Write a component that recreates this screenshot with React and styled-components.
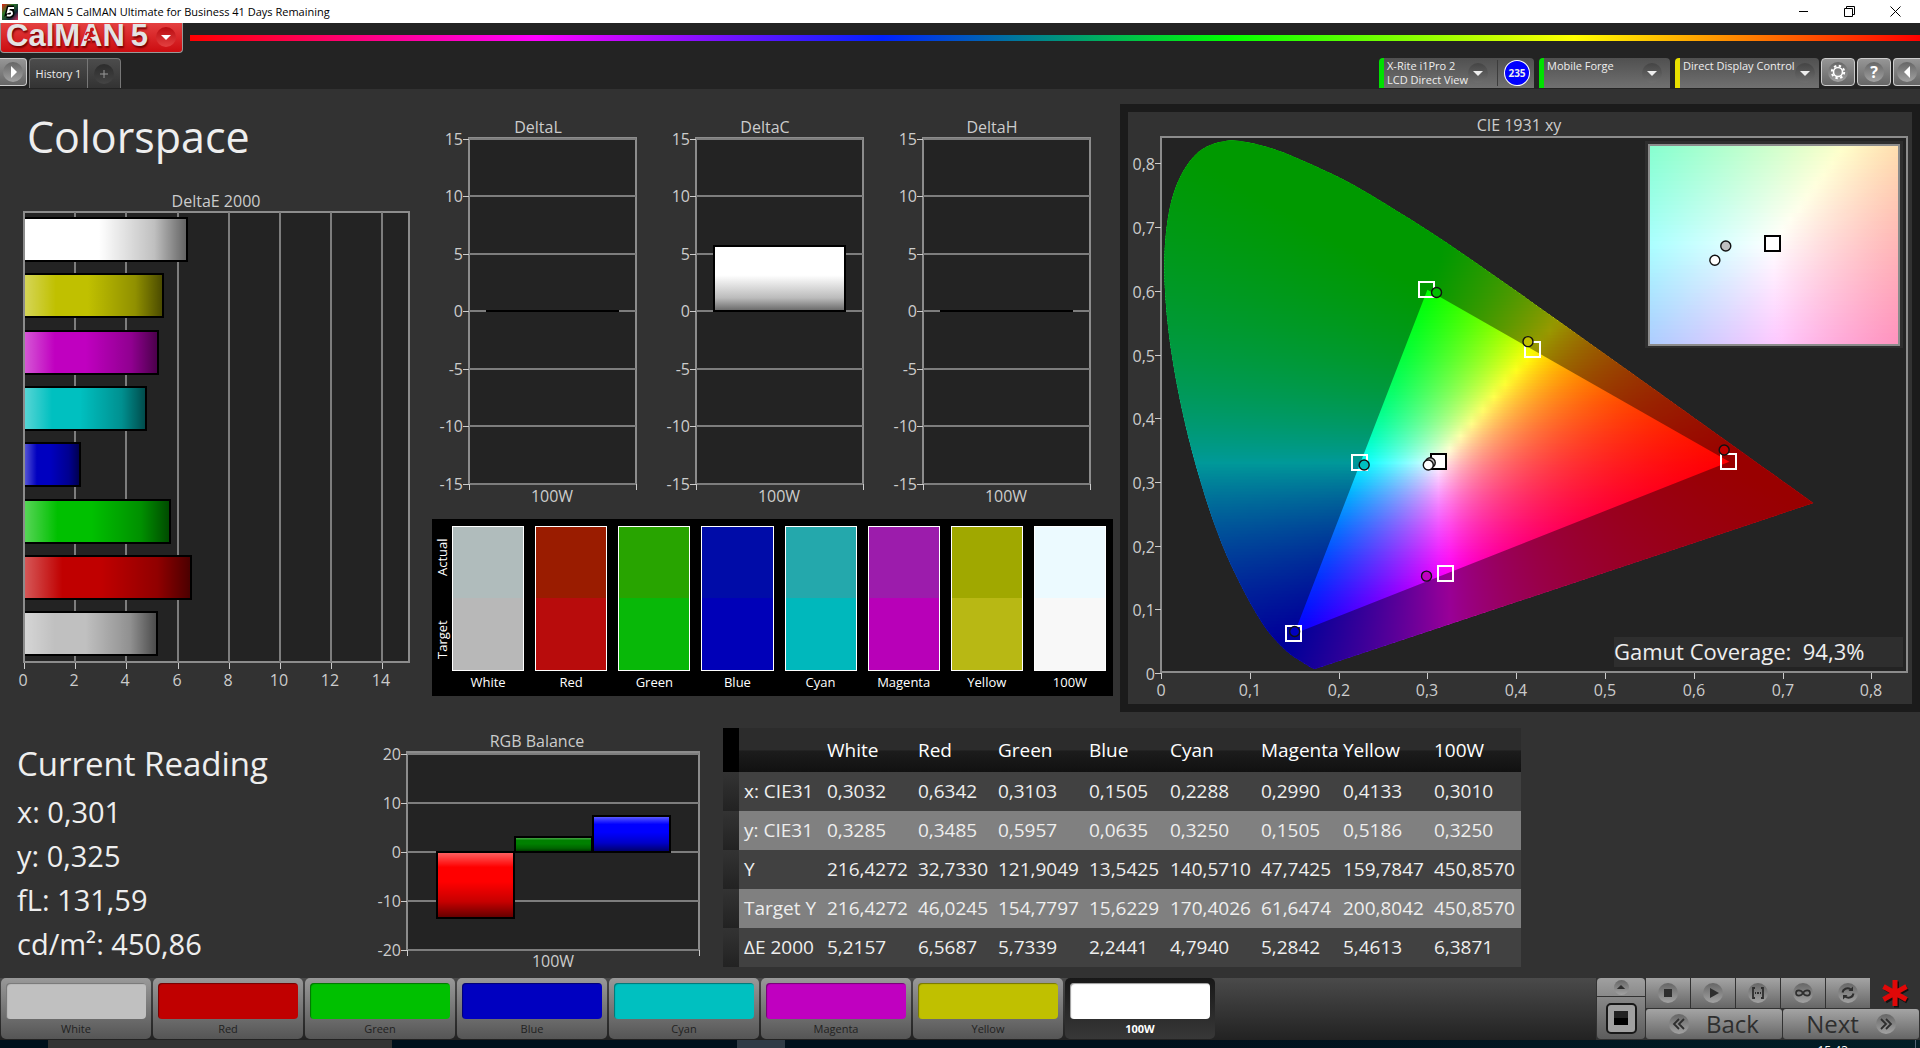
import React from "react";
import styled, { createGlobalStyle, css } from "styled-components";

const COLORS = {
  page: "#323232",
  chrome: "#232323",
  plot: "#232323",
  axis: "#8c8c8c",
  grid: "#7d7d7d",
  label: "#cccccc",
  text: "#eeeeee",
};

const FONT = '"Open Sans", "Noto Sans", sans-serif';

const PATCHES = [
  { name: "White", color: "#c0c0c0", actual: "#b0bcbc", target: "#b8b8b8", deltaE: 5.2157 },
  { name: "Red", color: "#c00000", actual: "#9a1c00", target: "#b80c0c", deltaE: 6.5687 },
  { name: "Green", color: "#00c000", actual: "#28a400", target: "#08b808", deltaE: 5.7339 },
  { name: "Blue", color: "#0000c0", actual: "#000ca8", target: "#0000b8", deltaE: 2.2441 },
  { name: "Cyan", color: "#00c0c0", actual: "#24a8ac", target: "#00b8bc", deltaE: 4.794 },
  { name: "Magenta", color: "#c000c0", actual: "#9c1cac", target: "#b800b8", deltaE: 5.2842 },
  { name: "Yellow", color: "#c0c000", actual: "#a0a800", target: "#b8b814", deltaE: 5.4613 },
  { name: "100W", color: "#ffffff", actual: "#ecfaff", target: "#f8f8f8", deltaE: 6.3871 },
];

const TABLE_ROWS = [
  ["x: CIE31", "0,3032", "0,6342", "0,3103", "0,1505", "0,2288", "0,2990", "0,4133", "0,3010"],
  ["y: CIE31", "0,3285", "0,3485", "0,5957", "0,0635", "0,3250", "0,1505", "0,5186", "0,3250"],
  ["Y", "216,4272", "32,7330", "121,9049", "13,5425", "140,5710", "47,7425", "159,7847", "450,8570"],
  ["Target Y", "216,4272", "46,0245", "154,7797", "15,6229", "170,4026", "61,6474", "200,8042", "450,8570"],
  ["ΔE 2000", "5,2157", "6,5687", "5,7339", "2,2441", "4,7940", "5,2842", "5,4613", "6,3871"],
];

// share of the table width per column, stub first
const TABLE_COLUMNS = [16, 84, 91, 80, 91, 81, 91, 82, 91, 91];

const READINGS = ["x: 0,301", "y: 0,325", "fL: 131,59", "cd/m²: 450,86"];

// CIE 1931 2° spectral locus
const LOCUS = [
  [0.1741, 0.005], [0.1726, 0.0048], [0.1689, 0.0069], [0.1644, 0.0109],
  [0.1566, 0.0177], [0.144, 0.0297], [0.1241, 0.0578], [0.1096, 0.0868],
  [0.0913, 0.1327], [0.0687, 0.2007], [0.0454, 0.295], [0.0235, 0.4127],
  [0.0082, 0.5384], [0.0039, 0.6548], [0.0139, 0.7502], [0.0389, 0.812],
  [0.0743, 0.8338], [0.1142, 0.8262], [0.1547, 0.8059], [0.1929, 0.7816],
  [0.2296, 0.7543], [0.3016, 0.6923], [0.3731, 0.6245], [0.4441, 0.5547],
  [0.5125, 0.4866], [0.5752, 0.4242], [0.627, 0.3725], [0.6915, 0.3083],
  [0.7347, 0.2653],
];

const TARGETS = [
  { x: 0.3, y: 0.6 },
  { x: 0.4193, y: 0.5053 },
  { x: 0.64, y: 0.33 },
  { x: 0.3209, y: 0.1542 },
  { x: 0.15, y: 0.06 },
  { x: 0.2246, y: 0.3287 },
  { x: 0.3127, y: 0.329, dark: true },
];

const MEASURED = [
  { x: 0.3032, y: 0.3285, fill: "#c0c0c0" },
  { x: 0.6342, y: 0.3485, fill: "#c00000" },
  { x: 0.3103, y: 0.5957, fill: "#00c000" },
  { x: 0.1505, y: 0.0635, fill: "#0000c0" },
  { x: 0.2288, y: 0.325, fill: "#00c0c0" },
  { x: 0.299, y: 0.1505, fill: "#c000c0" },
  { x: 0.4133, y: 0.5186, fill: "#c0c000" },
  { x: 0.301, y: 0.325, fill: "#ffffff" },
];

const range = (from, to, step) => {
  const out = [];
  for (let i = 0; from + i * step <= to + step / 100; i++) {
    out.push(from + i * step);
  }
  return out;
};

// xy chromaticity to the brightest displayable colour
const xyToColor = (x, y) => {
  const X = x / y;
  const Z = (1 - x - y) / y;
  const rgb = [
    3.2406 * X - 1.5372 - 0.4986 * Z,
    -0.9689 * X + 1.8758 + 0.0415 * Z,
    0.0557 * X - 0.204 + 1.057 * Z,
  ].map((v) => Math.max(v, 0));
  const top = Math.max(...rgb);
  return `rgb(${rgb.map((v) => Math.round((v / top) * 255)).join(",")})`;
};

/* ---------- charts ---------- */

const HorizontalBars = () => {
  const left = 24;
  const px = (v) => Math.round(left + v * 25.6);
  return (
    <Chart viewBox="0 0 425 510" role="img" aria-label="DeltaE 2000">
      <defs>
        <linearGradient id="shadeX">
          <stop offset="0" stopColor="#fff" stopOpacity="0.35" />
          <stop offset="0.23" stopColor="#fff" stopOpacity="0" />
          <stop offset="0.46" stopColor="#000" stopOpacity="0" />
          <stop offset="0.8" stopColor="#000" stopOpacity="0.25" />
          <stop offset="1" stopColor="#000" stopOpacity="0.62" />
        </linearGradient>
      </defs>
      <ChartText x="216" y="17" textAnchor="middle">
        DeltaE 2000
      </ChartText>
      <Plot x={left} y="22" width="385" height="450" />
      {range(0, 14, 2).map((v) => (
        <g key={v}>
          {v > 0 && <GridLine x1={px(v)} x2={px(v)} y1="22" y2="472" />}
          <Tick x1={px(v)} x2={px(v)} y1="473" y2="479" />
          <ChartText x={px(v) - 1} y="496" textAnchor="middle">
            {v}
          </ChartText>
        </g>
      ))}
      {[...PATCHES].reverse().map((p, i) => {
        const bar = {
          x: left,
          y: 28 + Math.round(i * 56.3),
          width: px(p.deltaE) - left - 1,
          height: 43,
        };
        return (
          <g key={p.name}>
            <rect {...bar} fill={p.color} />
            <rect {...bar} fill="url(#shadeX)" stroke="#000" strokeWidth="2" />
          </g>
        );
      })}
      <Axis x1={left} x2={left} y1="22" y2="472" />
    </Chart>
  );
};

const DeltaChart = ({ title, value }) => {
  const py = (v) => Math.round(199 - v * 11.5);
  return (
    <Chart viewBox="0 0 227 400" role="img" aria-label={title}>
      <defs>
        <linearGradient id="shadeDelta" x1="0" x2="0" y1="0" y2="1">
          <stop offset="0.45" stopColor="#fff" />
          <stop offset="0.8" stopColor="#bbb" />
          <stop offset="1" stopColor="#666" />
        </linearGradient>
      </defs>
      <ChartText x="113" y="21" textAnchor="middle">
        {title}
      </ChartText>
      <Plot x="44" y="26" width="167" height="346" />
      {range(-15, 15, 5).map((v) => (
        <g key={v}>
          <GridLine x1="44" x2="211" y1={py(v)} y2={py(v)} />
          <Tick x1="38" x2="44" y1={py(v)} y2={py(v)} />
          <ChartText x="38" y={py(v) + 6} textAnchor="end">
            {v}
          </ChartText>
        </g>
      ))}
      <Tick x1="44" x2="44" y1="372" y2="378" />
      <Tick x1="211" x2="211" y1="372" y2="378" />
      {value > 0 ? (
        <rect
          x="62"
          y={py(value) - 1}
          width="131"
          height={200 - py(value)}
          fill="url(#shadeDelta)"
          stroke="#000"
          strokeWidth="2"
        />
      ) : (
        <rect x="61" y="198" width="133" height="2" fill="#000" />
      )}
      <ChartText x="127" y="390" textAnchor="middle">
        100W
      </ChartText>
    </Chart>
  );
};

const BalanceChart = () => {
  const py = (v) => Math.round(120 - v * 4.9);
  const bars = [
    { x: 62, from: 0, to: -13.4, fill: "#ff0000" },
    { x: 140, from: 3, to: 0, fill: "#008000" },
    { x: 218, from: 7.3, to: 0, fill: "#0000ff" },
  ];
  return (
    <Chart viewBox="0 0 330 240" role="img" aria-label="RGB Balance">
      <defs>
        <linearGradient id="shadeY" x1="0" x2="0" y1="0" y2="1">
          <stop offset="0" stopColor="#fff" stopOpacity="0.4" />
          <stop offset="0.23" stopColor="#fff" stopOpacity="0" />
          <stop offset="0.45" stopColor="#000" stopOpacity="0" />
          <stop offset="0.75" stopColor="#000" stopOpacity="0.22" />
          <stop offset="1" stopColor="#000" stopOpacity="0.62" />
        </linearGradient>
      </defs>
      <ChartText x="162" y="15" textAnchor="middle">
        RGB Balance
      </ChartText>
      <Plot x="32" y="20" width="292" height="198" />
      {range(-20, 20, 10).map((v) => (
        <g key={v}>
          <GridLine x1="32" x2="324" y1={py(v)} y2={py(v)} />
          <Tick x1="26" x2="32" y1={py(v)} y2={py(v)} />
          <ChartText x="26" y={py(v) + 6} textAnchor="end">
            {v}
          </ChartText>
        </g>
      ))}
      <Tick x1="32" x2="32" y1="218" y2="224" />
      <Tick x1="324" x2="324" y1="218" y2="224" />
      {bars.map((b) => {
        const bar = {
          x: b.x,
          y: py(b.from),
          width: 77,
          height: py(b.to) - py(b.from),
        };
        return (
          <g key={b.fill}>
            <rect {...bar} fill={b.fill} />
            <rect {...bar} fill="url(#shadeY)" stroke="#000" strokeWidth="2" />
          </g>
        );
      })}
      <ChartText x="178" y="235" textAnchor="middle">
        100W
      </ChartText>
    </Chart>
  );
};

// Fills an xy area with thin horizontal strips, each one a sampled gradient
const Strips = ({ id, x0, x1, y0, y1, rows, cols, left, top, width, height }) => {
  const rowHeight = height / rows;
  return range(0, rows - 1, 1).map((r) => {
    const y = Math.max(y1 - ((r + 0.5) / rows) * (y1 - y0), 0.001);
    return (
      <React.Fragment key={r}>
        <linearGradient id={`${id}${r}`}>
          {range(0, cols, 1).map((c) => (
            <stop
              key={c}
              offset={c / cols}
              stopColor={xyToColor(x0 + (c / cols) * (x1 - x0), y)}
            />
          ))}
        </linearGradient>
        <rect
          x={left}
          y={top + r * rowHeight}
          width={width}
          height={Math.min(rowHeight + 1, height - r * rowHeight)}
          fill={`url(#${id}${r})`}
        />
      </React.Fragment>
    );
  });
};

const Target = ({ cx, cy, dark }) => (
  <rect
    x={Math.round(cx) - 8}
    y={Math.round(cy) - 8}
    width="15"
    height="15"
    fill={dark ? "#fff" : "none"}
    stroke={dark ? "#000" : "#fff"}
    strokeWidth="2"
  />
);

const Measured = ({ cx, cy, fill }) => (
  <circle cx={cx} cy={cy} r="5" fill={fill} stroke="#111" strokeWidth="1.4" />
);

const CieChart = () => {
  const px = (x) => 33 + x * 888;
  const py = (y) => 560 - y * 637;
  const ix = (x) => 645 + (x - 0.3127) * 4970;
  const iy = (y) => 132 - (y - 0.329) * 4050;

  const points = LOCUS.map(([x, y]) => [px(x), py(y)]);
  let locus = `M${points[0].join(" ")}`;
  for (let i = 0; i < points.length - 1; i++) {
    const a = points[Math.max(i - 1, 0)];
    const b = points[i];
    const c = points[i + 1];
    const d = points[Math.min(i + 2, points.length - 1)];
    locus += `C${b[0] + (c[0] - a[0]) / 6} ${b[1] + (c[1] - a[1]) / 6} ${
      c[0] - (d[0] - b[0]) / 6
    } ${c[1] - (d[1] - b[1]) / 6} ${c[0]} ${c[1]}`;
  }
  locus += "Z";
  const gamut = `M${px(0.64)} ${py(0.33)}L${px(0.3)} ${py(0.6)}L${px(0.15)} ${py(0.06)}Z`;

  return (
    <Chart viewBox="0 0 784 592" role="img" aria-label="CIE 1931 xy">
      <clipPath id="locus">
        <path d={locus} />
      </clipPath>
      <ChartText x="391" y="19" textAnchor="middle">
        CIE 1931 xy
      </ChartText>
      <Plot x="33" y="25" width="746" height="535" />
      {range(0, 8, 1).map((v) => (
        <g key={v}>
          <Tick x1={Math.round(px(v / 10))} x2={Math.round(px(v / 10))} y1="561" y2="567" />
          <ChartText x={Math.round(px(v / 10))} y="584" textAnchor="middle">
            {v ? `0,${v}` : "0"}
          </ChartText>
          <Tick x1="27" x2="33" y1={Math.round(py(v / 10)) + 1} y2={Math.round(py(v / 10)) + 1} />
          <ChartText x="27" y={Math.round(py(v / 10)) + 8} textAnchor="end">
            {v ? `0,${v}` : "0"}
          </ChartText>
        </g>
      ))}
      <g clipPath="url(#locus)">
        <Strips
          id="cie"
          x0={0}
          x1={0.75}
          y0={0}
          y1={0.85}
          rows={180}
          cols={60}
          left={px(0)}
          top={py(0.85)}
          width={px(0.75) - px(0)}
          height={py(0) - py(0.85)}
        />
        <path d={locus + gamut} fill="#000" fillOpacity="0.4" fillRule="evenodd" />
      </g>
      {TARGETS.map((t) => (
        <Target key={t.x} cx={px(t.x)} cy={py(t.y)} dark={t.dark} />
      ))}
      {MEASURED.map((m) => (
        <Measured key={m.x} cx={px(m.x)} cy={py(m.y)} fill={m.fill} />
      ))}

      <rect x="517" y="29" width="258" height="207" fill="#2e2e2e" />
      <Strips
        id="inset"
        x0={0.3127 - 124 / 4970}
        x1={0.3127 + 127 / 4970}
        y0={0.329 - 101 / 4050}
        y1={0.329 + 99 / 4050}
        rows={50}
        cols={30}
        left={521}
        top={33}
        width={250}
        height={200}
      />
      <rect x="521" y="33" width="250" height="200" fill="none" stroke="#8c8c8c" strokeWidth="2" />
      <Target cx={ix(0.3127)} cy={iy(0.329)} dark />
      <Measured cx={ix(0.3032)} cy={iy(0.3285)} fill="#c0c0c0" />
      <Measured cx={ix(0.301)} cy={iy(0.325)} fill="#ffffff" />

      <rect x="486" y="525" width="289" height="30" fill="#2e2e2e" />
      <GamutText x="486" y="548">
        {"Gamut Coverage:\u00a0 94,3%"}
      </GamutText>
    </Chart>
  );
};

/* ---------- icons ---------- */

const AppIcon = () => (
  <svg width="16" height="16" viewBox="0 0 16 16" aria-hidden="true">
    <defs>
      <linearGradient id="appicon" x1="0" x2="1" y1="0" y2="1">
        <stop offset="0" stopColor="#e02010" />
        <stop offset="0.35" stopColor="#2c7a2c" />
        <stop offset="0.7" stopColor="#123" />
        <stop offset="1" stopColor="#e03060" />
      </linearGradient>
    </defs>
    <rect width="16" height="16" fill="url(#appicon)" />
    <path
      d="M12 4H7L6 8c2-1 4-.8 4 1.200c0 2.400-2.800 2.800-5 2"
      fill="none"
      stroke="#000"
      strokeWidth="5"
    />
    <path
      d="M12 4H7L6 8c2-1 4-.8 4 1.200c0 2.400-2.800 2.800-5 2"
      fill="none"
      stroke="#fff"
      strokeWidth="2"
    />
  </svg>
);

const Runner = () => (
  <RunnerSvg viewBox="0 0 14 18" aria-hidden="true">
    <circle cx="9" cy="2.500" r="2" fill="#c81418" />
    <path
      d="M8 5.500L5.500 10l3 2.500-.5 4M5.500 10l-1.500 3H1M8 5.500L4 5.500 2.500 8M8 6l2 2.500h2.500"
      fill="none"
      stroke="#c81418"
      strokeWidth="1.700"
    />
  </RunnerSvg>
);

const Icon = ({ name, size = 20 }) => {
  const shapes = {
    down: <path d="M5 8h10l-5 5z" fill="currentColor" />,
    up: <path d="M4 13h12l-6-6z" fill="currentColor" />,
    left: <path d="M13 4v12l-6-6z" fill="currentColor" />,
    right: <path d="M8 4v12l6-6z" fill="currentColor" />,
    plus: <path d="M10 6v8M6 10h8" stroke="currentColor" strokeWidth="1" />,
    stop: <path d="M6 6h8v8H6z" fill="currentColor" />,
    play: <path d="M7 5v10l9-5z" fill="currentColor" />,
    range: (
      <path
        d="M7 5H5v10h2M13 5h2v10h-2M7 10h1M9 10h2M12 10h1"
        fill="none"
        stroke="currentColor"
        strokeWidth="1.800"
      />
    ),
    loop: (
      <path
        d="M10 10c-2-3.500-7-3.500-7 0s5 3.500 7 0s7-3.500 7 0s-5 3.500-7 0z"
        fill="none"
        stroke="currentColor"
        strokeWidth="1.600"
      />
    ),
    refresh: (
      <g fill="none" stroke="currentColor" strokeWidth="2">
        <path d="M4.500 9.500C5 6 9 4 13 6.500M15.500 10.500C15 14 11 16 7 13.500" />
        <path d="M15 3.500v4.500h-4.500zM5 16.500V12h4.500z" fill="currentColor" stroke="none" />
      </g>
    ),
    gear: (
      <g fill="none" stroke="currentColor">
        <circle cx="10" cy="10" r="4.500" strokeWidth="1.600" />
        <circle cx="10" cy="10" r="6.200" strokeWidth="2" strokeDasharray="2.400 2.470" />
      </g>
    ),
    back: <path d="M10 5l-5 5 5 5M15 5l-5 5 5 5" fill="none" stroke="currentColor" strokeWidth="1.800" />,
    next: <path d="M5 5l5 5-5 5M10 5l5 5-5 5" fill="none" stroke="currentColor" strokeWidth="1.800" />,
  };
  return (
    <svg width={size} height={size} viewBox="0 0 20 20" aria-hidden="true">
      {shapes[name]}
    </svg>
  );
};

const Asterisk = () => (
  <svg width="30" height="30" viewBox="0 0 30 30" role="img" aria-label="Busy">
    <g transform="translate(1.500 1.500)" stroke="#111" strokeWidth="5">
      <path d="M15 2v26M4 8.500l22 13M26 8.500l-22 13" />
    </g>
    <g stroke="#e00808" strokeWidth="5">
      <path d="M15 2v26M3.500 8.500l23 13M26.500 8.500l-23 13" />
    </g>
  </svg>
);

/* ---------- page ---------- */

const App = () => {
  return (
    <>
      <GlobalStyle />
      <Page>
        <TitleBar>
          <AppIcon />
          <WindowTitle>CalMAN 5 CalMAN Ultimate for Business 41 Days Remaining</WindowTitle>
          <WindowButton aria-label="Minimize">
            <svg width="11" height="11">
              <path d="M1 5.500h9" stroke="#000" />
            </svg>
          </WindowButton>
          <WindowButton aria-label="Restore">
            <svg width="11" height="11" fill="none" stroke="#000">
              <path d="M.5 2.500h8v8h-8zM2.500 2.500v-2h8v8h-2" />
            </svg>
          </WindowButton>
          <WindowButton aria-label="Close">
            <svg width="11" height="11" stroke="#000">
              <path d="M.5.5l10 10M10.500.5l-10 10" />
            </svg>
          </WindowButton>
        </TitleBar>

        <Brand>
          <Logo aria-label="CalMAN 5 menu">
            <LogoText>CalMAN</LogoText>
            <LogoText>5</LogoText>
            <Runner />
            <LogoArrow>
              <Icon name="down" />
            </LogoArrow>
          </Logo>
          <Rainbow />
        </Brand>

        <Toolbar>
          <PanelToggle aria-label="Open workflow panel">
            <Round>
              <Icon name="right" />
            </Round>
          </PanelToggle>
          <Tabs>
            <TabButton>History 1</TabButton>
            <AddTab aria-label="Add history">
              <Round $dark>
                <Icon name="plus" />
              </Round>
            </AddTab>
          </Tabs>
          <Spacer />
          <Device $strip="#00e000" $width="155px">
            <DeviceName>
              X-Rite i1Pro 2<br />
              LCD Direct View
            </DeviceName>
            <Round $dark>
              <Icon name="down" />
            </Round>
            <Divider />
            <Level>235</Level>
          </Device>
          <Device $strip="#00e000" $width="131px">
            <DeviceName>Mobile Forge</DeviceName>
            <Round $dark>
              <Icon name="down" />
            </Round>
          </Device>
          <Device $strip="#e8e000" $width="144px">
            <DeviceName>Direct Display Control</DeviceName>
            <Round $dark>
              <Icon name="down" />
            </Round>
          </Device>
          <ToolButton aria-label="Settings">
            <Round>
              <Icon name="gear" />
            </Round>
          </ToolButton>
          <ToolButton aria-label="Help">
            <Round>?</Round>
          </ToolButton>
          <ToolButton $last aria-label="Collapse">
            <Round>
              <Icon name="left" />
            </Round>
          </ToolButton>
        </Toolbar>

        <Main>
          <TopRow>
            <section>
              <Heading>Colorspace</Heading>
              <HorizontalBars />
            </section>
            <Middle>
              <Deltas>
                <DeltaChart title="DeltaL" value={0} />
                <DeltaChart title="DeltaC" value={5.6} />
                <DeltaChart title="DeltaH" value={0} />
              </Deltas>
              <SwatchPanel>
                <SwatchAxis>
                  <span>Target</span>
                  <span>Actual</span>
                </SwatchAxis>
                {PATCHES.map((p) => (
                  <SwatchColumn key={p.name}>
                    <Swatch $actual={p.actual} $target={p.target} />
                    {p.name}
                  </SwatchColumn>
                ))}
              </SwatchPanel>
            </Middle>
            <CiePanel>
              <CieChart />
            </CiePanel>
          </TopRow>

          <BottomRow>
            <Readings>
              <ReadingTitle>Current Reading</ReadingTitle>
              {READINGS.map((r) => (
                <Reading key={r}>{r}</Reading>
              ))}
            </Readings>
            <Balance>
              <BalanceChart />
            </Balance>
            <DataTable>
              <colgroup>
                {TABLE_COLUMNS.map((w, i) => (
                  <col key={i} style={{ width: `${(w / 798) * 100}%` }} />
                ))}
              </colgroup>
              <thead>
                <tr>
                  <Stub as="th" $head />
                  <HeadCell />
                  {PATCHES.map((p) => (
                    <HeadCell key={p.name} scope="col">
                      {p.name}
                    </HeadCell>
                  ))}
                </tr>
              </thead>
              <tbody>
                {TABLE_ROWS.map(([name, ...values]) => (
                  <BodyRow key={name}>
                    <Stub />
                    <RowName scope="row">{name}</RowName>
                    {values.map((v, i) => (
                      <Cell key={i}>{v}</Cell>
                    ))}
                  </BodyRow>
                ))}
              </tbody>
            </DataTable>
          </BottomRow>
        </Main>

        <Footer>
          <PatchList>
            {PATCHES.map((p) => (
              <PatchButton key={p.name} $active={p.name === "100W"}>
                <PatchColor $color={p.color} />
                {p.name}
              </PatchButton>
            ))}
          </PatchList>
          <Controls>
            <PatternColumn>
              <PatternUp aria-label="Show patterns">
                <Round $small>
                  <Icon name="up" size={14} />
                </Round>
              </PatternUp>
              <PatternButton aria-label="Pattern window">
                <PatternPreview />
              </PatternButton>
            </PatternColumn>
            <Transport>
              <TransportRow>
                {[
                  ["stop", "Stop"],
                  ["play", "Read"],
                  ["range", "Read series"],
                  ["loop", "Read continuous"],
                  ["refresh", "Refresh"],
                ].map(([icon, label]) => (
                  <TransportButton key={icon} aria-label={label}>
                    <Round>
                      <Icon name={icon} />
                    </Round>
                  </TransportButton>
                ))}
                <Status>
                  <Asterisk />
                </Status>
              </TransportRow>
              <TransportRow>
                <StepButton>
                  <Round>
                    <Icon name="back" />
                  </Round>
                  Back
                </StepButton>
                <StepButton>
                  Next
                  <Round>
                    <Icon name="next" />
                  </Round>
                </StepButton>
              </TransportRow>
            </Transport>
          </Controls>
        </Footer>

        <Taskbar>
          <TaskItem />
          <TaskItem $active />
          <Clock>15:43</Clock>
        </Taskbar>
      </Page>
    </>
  );
};

const GlobalStyle = createGlobalStyle`
  * {
    box-sizing: border-box;
  }
  body {
    margin: 0;
    background: ${COLORS.page};
    font-family: ${FONT};
    color: ${COLORS.text};
  }
  button {
    margin: 0;
    padding: 0;
    border: 0;
    font-family: inherit;
    color: inherit;
    cursor: pointer;
  }
  svg {
    display: block;
    flex: none;
  }
`;

const Page = styled.div`
  display: flex;
  flex-direction: column;
  min-height: 100vh;
  overflow: hidden;
`;

const TitleBar = styled.header`
  display: flex;
  align-items: center;
  height: 23px;
  padding: 0 2px;
  background: #fff;
  color: #000;
`;

const WindowTitle = styled.div`
  flex: 1;
  margin-left: 5px;
  font-size: 11px;
`;

const WindowButton = styled.button`
  display: flex;
  align-items: center;
  justify-content: center;
  width: 46px;
  height: 20px;
  background: none;
`;

const Brand = styled.div`
  display: flex;
  align-items: flex-start;
  height: 35px;
  background: ${COLORS.chrome};
`;

const Logo = styled.button`
  position: relative;
  display: flex;
  align-items: flex-start;
  gap: 6px;
  width: 183px;
  height: 30px;
  padding-left: 5px;
  border: 1px solid #999;
  border-top: 0;
  border-radius: 0 0 4px 4px;
  background: linear-gradient(#e44040, #cc0c10);
`;

const LogoText = styled.span`
  font-family: "Liberation Sans", Arial, sans-serif;
  font-size: 31px;
  font-weight: bold;
  line-height: 26px;
  color: #e4e4e4;
  text-shadow: 1px 2px 2px #700;
`;

const RunnerSvg = styled.svg`
  position: absolute;
  left: 82px;
  top: 4px;
  width: 14px;
  height: 18px;
`;

const LogoArrow = styled.span`
  margin: 4px 6px 0 auto;
  border-radius: 50%;
  background: linear-gradient(#b80c10, #e44040);
  color: #fff;
`;

const Rainbow = styled.div`
  flex: 1;
  height: 6px;
  margin: 12px 0 0 7px;
  background: linear-gradient(90deg, #f00, #f0f, #0020ff, #0f0, #ff0, #f00);
`;

const Toolbar = styled.div`
  display: flex;
  align-items: flex-start;
  height: 31px;
  overflow: hidden;
  background: ${COLORS.chrome};
`;

const Round = styled.span`
  display: flex;
  flex: none;
  align-items: center;
  justify-content: center;
  width: 20px;
  height: 20px;
  border-radius: 50%;
  font-size: 16px;
  font-weight: bold;
  line-height: 20px;
  background: linear-gradient(#666, #a2a2a2);
  ${(p) => p.$dark && css`background: linear-gradient(#444, #6e6e6e);`}
  ${(p) => p.$small && css`width: 15px; height: 15px;`}
`;

const toolbarButton = css`
  display: flex;
  align-items: center;
  justify-content: center;
  height: 28px;
  border: 1px solid #ccc;
  border-radius: 4px;
  background: linear-gradient(#969696, #666);
  color: #fff;
`;

const PanelToggle = styled.button`
  ${toolbarButton}
  width: 27px;
  border-left: 0;
  border-radius: 0 4px 4px 0;
`;

const ToolButton = styled.button`
  ${toolbarButton}
  width: 34px;
  margin-left: 2px;
  ${(p) => p.$last && css`
    width: 27px;
    border-right: 0;
    border-radius: 4px 0 0 4px;
  `}
`;

const Tabs = styled.div`
  display: flex;
  height: 30px;
  margin-left: 2px;
  border: 1px solid #777;
  border-bottom: 0;
  border-radius: 4px 4px 0 0;
  background: linear-gradient(#4c4c4c, #333);
`;

const TabButton = styled.button`
  width: 58px;
  border-right: 1px solid #777;
  background: none;
  font-size: 11px;
`;

const AddTab = styled.button`
  display: flex;
  align-items: center;
  justify-content: center;
  width: 32px;
  background: none;
  color: #999;
  ${Round} {
    background: linear-gradient(#2c2c2c, #444);
  }
`;

const Spacer = styled.div`
  flex: 1;
`;

const Device = styled.button`
  display: flex;
  align-items: center;
  width: ${(p) => p.$width};
  height: 30px;
  margin-left: 5px;
  padding-right: 8px;
  border-left: 5px solid ${(p) => p.$strip};
  border-radius: 4px 4px 0 0;
  background: linear-gradient(#505050, #707070);
`;

const DeviceName = styled.span`
  flex: 1;
  align-self: flex-start;
  padding: 1px 0 0 3px;
  font-size: 11px;
  line-height: 14px;
  text-align: left;
  white-space: nowrap;
`;

const Divider = styled.span`
  width: 1px;
  height: 26px;
  margin: 0 6px 0 9px;
  background: #3c3c3c;
`;

const Level = styled.span`
  width: 26px;
  height: 26px;
  margin-right: -4px;
  border: 1px solid #fff;
  border-radius: 50%;
  background: #00f;
  font-size: 10px;
  font-weight: bold;
  line-height: 24px;
  text-align: center;
`;

const Main = styled.main`
  flex: 1;
  background: ${COLORS.page};
`;

const TopRow = styled.div`
  display: grid;
  grid-template-columns: 425fr 695fr 800fr;
  align-items: start;
`;

const Heading = styled.h1`
  margin: 0;
  padding: 18px 0 23px 27px;
  font-size: 43px;
  font-weight: 400;
  line-height: 60px;
`;

const Chart = styled.svg`
  width: 100%;
  height: auto;
  overflow: visible;
`;

const ChartText = styled.text`
  fill: ${COLORS.label};
  font-family: ${FONT};
  font-size: 16px;
`;

const GamutText = styled.text`
  fill: ${COLORS.text};
  font-family: ${FONT};
  font-size: 22px;
`;

const Plot = styled.rect`
  fill: ${COLORS.plot};
  stroke: ${COLORS.axis};
  stroke-width: 2;
`;

const GridLine = styled.line`
  stroke: ${COLORS.grid};
  stroke-width: 2;
`;

const Axis = styled.line`
  stroke: ${COLORS.axis};
  stroke-width: 2;
`;

const Tick = styled.line`
  stroke: ${COLORS.label};
  stroke-width: 1;
  shape-rendering: crispEdges;
`;

const Middle = styled.section`
  padding: 23px 7px 0 0;
`;

const Deltas = styled.div`
  display: grid;
  grid-template-columns: repeat(3, 1fr);
  margin-right: 7px;
`;

const SwatchPanel = styled.div`
  display: grid;
  grid-template-columns: 9px repeat(8, 1fr);
  column-gap: 11px;
  margin: 7px 0 0 7px;
  padding: 7px 7px 0 0;
  height: 177px;
  background: #000;
`;

const SwatchAxis = styled.div`
  display: flex;
  justify-content: space-between;
  width: 20px;
  height: 145px;
  padding: 12px 0;
  writing-mode: vertical-rl;
  transform: rotate(180deg);
  font-size: 13px;
  line-height: 20px;
  color: #fff;
`;

const SwatchColumn = styled.div`
  color: #fff;
  font-size: 13px;
  line-height: 22px;
  text-align: center;
`;

const Swatch = styled.div`
  height: 145px;
  border: 1px solid #fff;
  background: linear-gradient(
    ${(p) => p.$actual} 50%,
    ${(p) => p.$target} 50%
  );
`;

const CiePanel = styled.section`
  margin-top: 15px;
  border: 8px solid #1b1b1b;
`;

const BottomRow = styled.div`
  display: grid;
  grid-template-columns: 375fr 348fr 798fr 399fr;
  align-items: start;
`;

const Readings = styled.section`
  padding: 31px 0 0 17px;
`;

const ReadingTitle = styled.h2`
  margin: 0 0 5px;
  font-size: 33px;
  font-weight: 400;
  line-height: 42px;
`;

const Reading = styled.p`
  margin: 0;
  font-size: 29px;
  line-height: 44px;
`;

const Balance = styled.section`
  padding: 20px 18px 0 0;
`;

const DataTable = styled.table`
  width: 100%;
  margin-top: 16px;
  border-collapse: collapse;
  table-layout: fixed;
  font-size: 19px;
  line-height: 39px;
  white-space: nowrap;
`;

const Stub = styled.td`
  padding: 0;
  background: ${(p) => (p.$head ? "#000" : "linear-gradient(#333, #222)")};
`;

const HeadCell = styled.th`
  padding: 0 0 0 4px;
  background: linear-gradient(#2c2c2c 50%, #1c1c1c 52%, #111);
  font-weight: 400;
  line-height: 44px;
  text-align: left;
  color: #fff;
`;

const RowName = styled.th`
  padding: 0 0 0 5px;
  font-weight: 400;
  text-align: left;
`;

const Cell = styled.td`
  padding: 0 0 0 4px;
`;

const BodyRow = styled.tr`
  background: #414141;
  &:nth-child(even) {
    background: #808080;
  }
`;

const Footer = styled.footer`
  display: flex;
  justify-content: space-between;
  height: 62px;
  background: linear-gradient(#4a4a4a, #222);
`;

const PatchList = styled.div`
  display: flex;
  gap: 2px;
  margin-left: 1px;
`;

const PatchButton = styled.button`
  width: 150px;
  height: 61px;
  padding: 5px 5px 0;
  border-radius: 5px;
  background: linear-gradient(#999, #555);
  color: #222;
  font-size: 11px;
  line-height: 20px;
  ${(p) => p.$active && css`
    background: linear-gradient(#181818, #383838);
    color: #fff;
    font-weight: bold;
  `}
`;

const PatchColor = styled.span`
  display: block;
  height: 36px;
  border-radius: 4px;
  box-shadow: inset 1px 1px 1px rgba(0, 0, 0, 0.4);
  background: ${(p) => p.$color};
`;

const Controls = styled.div`
  display: flex;
  gap: 1px;
  padding: 0 1px 1px;
  background: ${COLORS.page};
  color: #2e2e2e;
`;

const PatternColumn = styled.div`
  display: flex;
  flex-direction: column;
  gap: 1px;
  width: 48px;
`;

const PatternUp = styled.button`
  display: flex;
  align-items: center;
  justify-content: center;
  height: 18px;
  border-radius: 4px 4px 0 0;
  background: linear-gradient(#a0a0a0, #8a8a8a);
`;

const PatternButton = styled.button`
  display: flex;
  align-items: center;
  justify-content: center;
  flex: 1;
  border-radius: 0 0 4px 4px;
  background: linear-gradient(#888, #5c5c5c);
`;

const PatternPreview = styled.span`
  width: 31px;
  height: 31px;
  border: 2px solid #181818;
  border-radius: 5px;
  background: linear-gradient(#222 50%, #000 50%) center / 14px 14px no-repeat,
    #a0a0a0;
`;

const Transport = styled.div`
  display: flex;
  flex-direction: column;
  gap: 1px;
  width: 273px;
`;

const TransportRow = styled.div`
  display: flex;
  flex: 1;
  gap: 1px;
`;

const TransportButton = styled.button`
  display: flex;
  align-items: center;
  justify-content: center;
  width: 44px;
  background: linear-gradient(#a4a4a4, #666);
`;

const Status = styled.div`
  display: flex;
  flex: 1;
  align-items: center;
  justify-content: center;
`;

const StepButton = styled.button`
  display: flex;
  flex: 1;
  align-items: center;
  justify-content: center;
  gap: 17px;
  border-radius: 3px;
  background: linear-gradient(#a4a4a4, #666);
  font-size: 24px;
  font-weight: 500;
  line-height: 28px;
`;

const Taskbar = styled.div`
  display: flex;
  height: 8px;
  padding-left: 48px;
  overflow: hidden;
  background: linear-gradient(90deg, #00101c 60%, #021e26);
`;

const TaskItem = styled.div`
  width: 344px;
  background: #333;
  ${(p) => p.$active && css`
    width: 48px;
    margin-left: 345px;
    background: #2f3b46;
  `}
`;

const Clock = styled.div`
  margin: 0 4px 0 auto;
  padding: 3px 67px 0 0;
  border-right: 1px solid #567;
  font-size: 12px;
  line-height: 16px;
  color: #fff;
`;

export default App;
